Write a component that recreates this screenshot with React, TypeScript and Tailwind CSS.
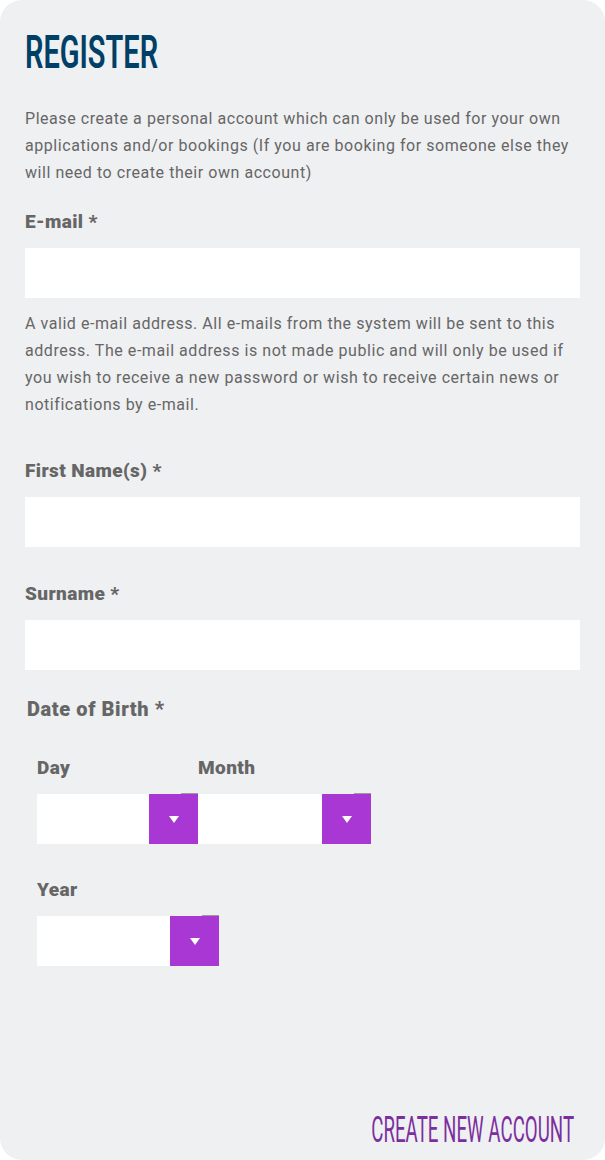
import React from 'react'

const labelCls = 'block text-[19px] font-black text-[#666] tracking-[0.4px] leading-6'

function Field({ label, top }: { label: string; top: string }) {
  return (
    <div className={top}>
      <label className={labelCls}>{label}</label>
      <div className="mt-[14px] h-[50px] bg-white" />
    </div>
  )
}

function Select({ label, width }: { label: string; width: string }) {
  return (
    <div>
      <div className={labelCls}>{label}</div>
      <div className={`mt-[14px] flex h-[50px] bg-white ${width}`}>
        <div className="flex-1" />
        <div className="relative flex w-[49px] items-center justify-center bg-[#a937d4]">
          <div className="absolute -top-px right-0 h-px w-[17px] bg-[#9a9a9a]" />
          <svg width="10" height="7" viewBox="0 0 10 7">
            <path d="M0 0h10L5 7z" fill="#fff" />
          </svg>
        </div>
      </div>
    </div>
  )
}

export default function App() {
  return (
    <div className="min-h-[1160px] w-[605px] bg-white" style={{ fontFamily: 'Roboto, "Liberation Sans", sans-serif' }}>
      <div className="flex h-[1160px] flex-col rounded-[22px] bg-[#eff0f2] px-[25px] pt-[30px]">
        <h1 className="origin-left scale-x-[0.63] text-[46px] font-semibold leading-[44px] text-[#003f66] whitespace-nowrap">REGISTER</h1>
        <p className="mt-[31px] text-[16px] leading-[27px] tracking-[0.55px] text-[#666]">
          Please create a personal account which can only be used for your own applications and/or bookings (If you are booking for someone else they will need to create their own account)
        </p>
        <Field label="E-mail *" top="mt-[24px]" />
        <p className="mt-[12px] text-[16px] leading-[27px] tracking-[0.55px] text-[#666]">
          A valid e-mail address. All e-mails from the system will be sent to this address. The e-mail address is not made public and will only be used if you wish to receive a new password or wish to receive certain news or notifications by e-mail.
        </p>
        <Field label="First Name(s) *" top="mt-[41px]" />
        <Field label="Surname *" top="mt-[35px]" />
        <div className="mt-[27px] pl-[2px] text-[20px] font-black text-[#666] tracking-[0.6px] leading-6">Date of Birth *</div>
        <div className="mt-[35px] flex pl-[12px]">
          <Select label="Day" width="w-[161px]" />
          <Select label="Month" width="w-[173px]" />
        </div>
        <div className="mt-[34px] pl-[12px]">
          <Select label="Year" width="w-[182px]" />
        </div>
        <div className="mt-auto flex justify-end pb-[10px] pr-[6px]">
          <button className="origin-right scale-x-[0.52] whitespace-nowrap text-[36px] font-normal leading-[40px] text-[#7b2f9e]">CREATE NEW ACCOUNT</button>
        </div>
      </div>
    </div>
  )
}
